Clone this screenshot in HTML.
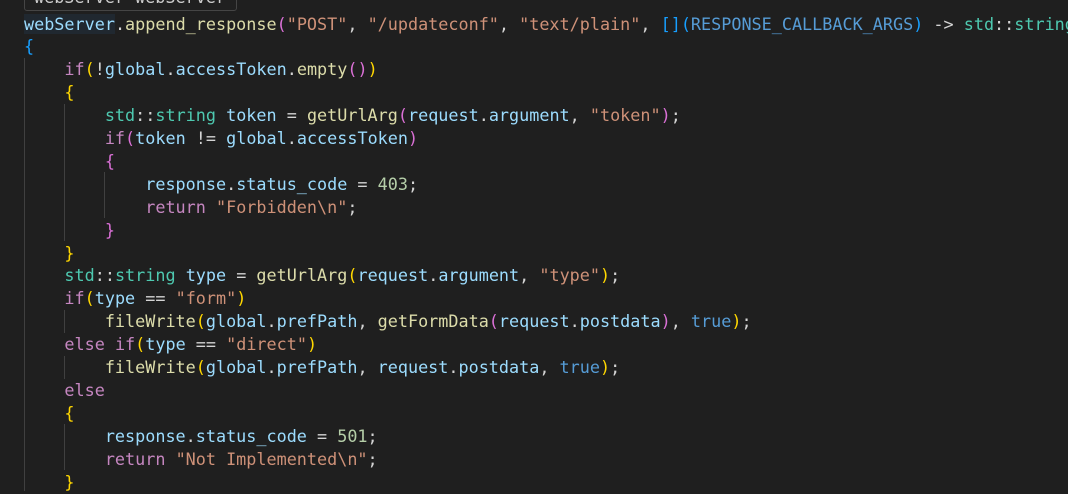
<!DOCTYPE html>
<html><head><style>
body{margin:0;width:1068px;height:491px;background:#1f1f1f;overflow:hidden;position:relative}
pre{margin:0;position:absolute;left:24px;top:12.5px;font-family:"DejaVu Sans Mono","Liberation Mono",monospace;font-size:16.8px;line-height:22.9px;color:#d4d4d4;white-space:pre}
.v{color:#9cdcfe}.f{color:#dcdcaa}.s{color:#ce9178}.k{color:#c586c0}.t{color:#4ec9b0}.n{color:#b5cea8}.b{color:#569cd6}
.g{color:#ffd700}.p{color:#da70d6}.bl{color:#179fff}
.hl{background:#264f7833}
.guide{position:absolute;width:1px;background:#404040}
.tip{position:absolute;left:24px;top:-14px;width:213px;height:25px;border:1px solid #454545;border-radius:3px;background:#202020;font-family:"DejaVu Sans Mono",monospace;font-size:16.8px;color:#cccccc;box-sizing:border-box;padding-left:9px;line-height:20px}
</style></head><body>
<div class="guide" style="left:24px;top:58px;height:433px"></div>
<div class="guide" style="left:64px;top:104px;height:137px"></div>
<div class="guide" style="left:104px;top:172px;height:46px"></div>
<div class="guide" style="left:64px;top:310px;height:23px"></div>
<div class="guide" style="left:64px;top:356px;height:23px"></div>
<div class="guide" style="left:64px;top:424px;height:46px"></div>
<div class="tip">webServer webServer</div>
<pre><span class="v hl">webServer</span>.<span class="f">append_response</span><span class="p">(</span><span class="s">"POST"</span>, <span class="s">"/updateconf"</span>, <span class="s">"text/plain"</span>, <span class="bl">[]</span><span class="bl">(</span><span class="b">RESPONSE_CALLBACK_ARGS</span><span class="bl">)</span> -&gt; <span class="t">std</span>::<span class="t">string</span>
<span class="bl">{</span>
    <span class="k">if</span><span class="g">(</span>!<span class="v">global</span>.<span class="v">accessToken</span>.<span class="f">empty</span><span class="p">()</span><span class="g">)</span>
    <span class="g">{</span>
        <span class="t">std</span>::<span class="t">string</span> <span class="v">token</span> = <span class="f">getUrlArg</span><span class="p">(</span><span class="v">request</span>.<span class="v">argument</span>, <span class="s">"token"</span><span class="p">)</span>;
        <span class="k">if</span><span class="p">(</span><span class="v">token</span> != <span class="v">global</span>.<span class="v">accessToken</span><span class="p">)</span>
        <span class="p">{</span>
            <span class="v">response</span>.<span class="v">status_code</span> = <span class="n">403</span>;
            <span class="k">return</span> <span class="s">"Forbidden\n"</span>;
        <span class="p">}</span>
    <span class="g">}</span>
    <span class="t">std</span>::<span class="t">string</span> <span class="v">type</span> = <span class="f">getUrlArg</span><span class="g">(</span><span class="v">request</span>.<span class="v">argument</span>, <span class="s">"type"</span><span class="g">)</span>;
    <span class="k">if</span><span class="g">(</span><span class="v">type</span> == <span class="s">"form"</span><span class="g">)</span>
        <span class="f">fileWrite</span><span class="g">(</span><span class="v">global</span>.<span class="v">prefPath</span>, <span class="f">getFormData</span><span class="p">(</span><span class="v">request</span>.<span class="v">postdata</span><span class="p">)</span>, <span class="b">true</span><span class="g">)</span>;
    <span class="k">else</span> <span class="k">if</span><span class="g">(</span><span class="v">type</span> == <span class="s">"direct"</span><span class="g">)</span>
        <span class="f">fileWrite</span><span class="g">(</span><span class="v">global</span>.<span class="v">prefPath</span>, <span class="v">request</span>.<span class="v">postdata</span>, <span class="b">true</span><span class="g">)</span>;
    <span class="k">else</span>
    <span class="g">{</span>
        <span class="v">response</span>.<span class="v">status_code</span> = <span class="n">501</span>;
        <span class="k">return</span> <span class="s">"Not Implemented\n"</span>;
    <span class="g">}</span>
</pre>
</body></html>
